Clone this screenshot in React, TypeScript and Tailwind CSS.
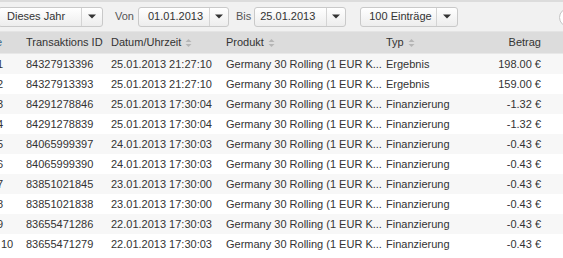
import React from "react";

const rows = [
  ["1", "84327913396", "25.01.2013 21:27:10", "Ergebnis", "198.00 €"],
  ["2", "84327913393", "25.01.2013 21:27:10", "Ergebnis", "159.00 €"],
  ["3", "84291278846", "25.01.2013 17:30:04", "Finanzierung", "-1.32 €"],
  ["4", "84291278839", "25.01.2013 17:30:04", "Finanzierung", "-1.32 €"],
  ["5", "84065999397", "24.01.2013 17:30:03", "Finanzierung", "-0.43 €"],
  ["6", "84065999390", "24.01.2013 17:30:03", "Finanzierung", "-0.43 €"],
  ["7", "83851021845", "23.01.2013 17:30:00", "Finanzierung", "-0.43 €"],
  ["8", "83851021838", "23.01.2013 17:30:00", "Finanzierung", "-0.43 €"],
  ["9", "83655471286", "22.01.2013 17:30:03", "Finanzierung", "-0.43 €"],
  ["10", "83655471279", "22.01.2013 17:30:03", "Finanzierung", "-0.43 €"],
];

function Arrow() {
  return (
    <svg width="8" height="5" viewBox="0 0 8 5">
      <path d="M0 0.5 L8 0.5 L4 4.5 Z" fill="#333" />
    </svg>
  );
}

function Sort() {
  return (
    <svg width="7" height="10" viewBox="0 0 7 10" className="ml-[4px]">
      <path d="M0.5 4 L3.5 1 L6.5 4 Z" fill="#b5b5b5" />
      <path d="M0.5 6 L3.5 9 L6.5 6 Z" fill="#b5b5b5" />
    </svg>
  );
}

function Select({ label, leftW, arrowW, pad, extra }: { label: string; leftW: string; arrowW: string; pad: string; extra?: string }) {
  return (
    <div className={`flex h-[20px] rounded-[3px] border border-[#c9c9c9] bg-gradient-to-b from-[#ffffff] to-[#ededed] ${extra ?? ""}`}>
      <div className={`flex items-center ${leftW} ${pad} text-[#333]`}>{label}</div>
      <div className={`flex items-center justify-center border-l border-[#d4d4d4] ${arrowW}`}>
        <Arrow />
      </div>
    </div>
  );
}

export default function App() {
  return (
    <div className="w-[563px] h-[258px] overflow-hidden bg-white text-[11px] text-[#333]" style={{ fontFamily: '"Liberation Sans", Arial, sans-serif' }}>
      <div className="h-[32px] border-t-2 border-[#dcdcdc] border-b border-b-[#e4e4e4] bg-[#f1f1f1] flex items-center relative">
        <Select label="Dieses Jahr" leftW="w-[82px]" arrowW="w-[21px]" pad="pl-[8px]" extra="-ml-[2px]" />
        <span className="ml-[12px] text-[#555]">Von</span>
        <Select label="01.01.2013" leftW="w-[70px]" arrowW="w-[19px]" pad="pl-[9px]" extra="ml-[4px]" />
        <span className="ml-[7px] text-[#555]">Bis</span>
        <Select label="25.01.2013" leftW="w-[71px]" arrowW="w-[19px]" pad="pl-[5px]" extra="ml-[3px]" />
        <Select label="100 Einträge" leftW="w-[75px]" arrowW="w-[21px]" pad="pl-[8px]" extra="ml-[14px]" />
        <div className="absolute left-[559px] top-[6px] h-[19px] w-[60px] rounded-full border border-[#c4c4c4] bg-white" />
      </div>
      <div className="grid grid-cols-[26px_85px_115px_160px_100px_55px_1fr] h-[22px] items-center bg-[#dcdcdc] border-b border-[#e8e8e8] text-[#333]">
        <div className="-ml-[4px] text-[#3a6a8a]">e</div>
        <div>Transaktions ID</div>
        <div className="flex items-center">Datum/Uhrzeit<Sort /></div>
        <div className="flex items-center">Produkt<Sort /></div>
        <div className="flex items-center">Typ<Sort /></div>
        <div className="text-right">Betrag</div>
        <div />
      </div>
      {rows.map((r, i) => (
        <div
          key={i}
          className={`grid grid-cols-[26px_85px_115px_160px_100px_55px_1fr] h-[20px] items-center ${i % 2 === 0 ? "bg-[#f7f7f7]" : "bg-white"}`}
        >
          <div className={`whitespace-nowrap ${r[0] === "10" ? "ml-[1px]" : "-ml-[3px]"}`}>{r[0]}</div>
          <div>{r[1]}</div>
          <div className="whitespace-nowrap">{r[2]}</div>
          <div className="whitespace-nowrap">Germany 30 Rolling (1 EUR K...</div>
          <div>{r[3]}</div>
          <div className="text-right whitespace-nowrap">{r[4]}</div>
          <div />
        </div>
      ))}
    </div>
  );
}
